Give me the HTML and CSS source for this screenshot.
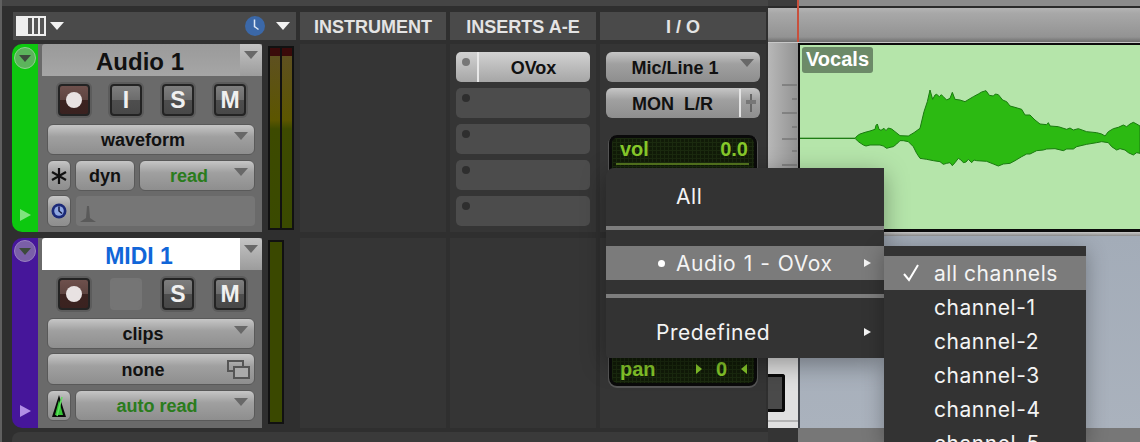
FILE: index.html
```html
<!DOCTYPE html>
<html lang="en">
<head>
<meta charset="utf-8">
<title>Pro Tools Edit Window</title>
<link rel="stylesheet" href="styles.css">
</head>
<body>
<div class="app">
  <section class="mixer">
    <div class="topband"></div>
    <div class="columns headers">
      <div class="head head-tools">
        <svg class="view-icon" width="30" height="20" viewBox="0 0 30 20"><rect width="30" height="20" fill="#eee"/><rect x="12" y="2" width="4" height="16" fill="#555"/><rect x="18" y="2" width="4" height="16" fill="#555"/><rect x="24" y="2" width="4" height="16" fill="#555"/></svg>
        <i class="tri tri-white"></i>
        <svg class="clock-icon" width="22" height="22" viewBox="0 0 22 22"><circle cx="11" cy="11" r="10" fill="#3b68a8"/><path d="M10.5 4.5v7l4 3" stroke="#dfe8f5" stroke-width="1.5" fill="none"/></svg>
        <i class="tri tri-white"></i>
      </div>
      <div class="head">INSTRUMENT</div>
      <div class="head">INSERTS A-E</div>
      <div class="head">I / O</div>
    </div>

    <div class="columns track track-one">
      <div class="strip">
        <div class="color color-audio">
          <span class="disc disc-audio"><i class="tri tri-dark"></i></span>
          <svg width="12" height="12" viewBox="0 0 12 12"><path d="M1 0l11 6-11 6z" fill="#7fe47f"/></svg>
        </div>
        <div class="panel">
          <div class="name"><span class="name-text">Audio 1</span><span class="name-arrow"><i class="tri tri-grey"></i></span></div>
          <div class="btns">
            <span class="btn rec"><b class="dot"></b></span>
            <span class="btn">I</span>
            <span class="btn">S</span>
            <span class="btn">M</span>
          </div>
          <div class="pill pill-mode"><span class="lbl">waveform</span><i class="tri tri-grey corner"></i></div>
          <div class="line">
            <span class="pill sq"><svg width="18" height="18" viewBox="0 0 18 18"><path d="M9 1v16M2 5l14 8M16 5L2 13" stroke="#111" stroke-width="2.2"/></svg></span>
            <span class="pill dyn"><span class="lbl-c">dyn</span></span>
            <span class="pill grow green"><span class="lbl">read</span><i class="tri tri-grey corner"></i></span>
          </div>
          <div class="line line-low">
            <span class="pill sq"><svg width="18" height="18" viewBox="0 0 18 18"><circle cx="9" cy="9" r="7.5" fill="#1c2a78"/><circle cx="9" cy="9" r="4.8" fill="#8ea6e0"/><path d="M9 4.5V9l3 2.5" stroke="#10163f" stroke-width="1.5" fill="none"/></svg></span>
            <span class="empty"><svg width="16" height="18" viewBox="0 0 16 18"><path d="M7 1h2l1 12 6 4H0l6-4z" fill="#5a5a5a"/></svg></span>
          </div>
        </div>
        <div class="meter meter-two">
          <span class="ch ch-hot"></span><span class="ch ch-hot"></span>
        </div>
      </div>
      <div class="cell"></div>
      <div class="cell inserts">
        <div class="slot slot-on"><i class="led"></i><span class="slot-name">OVox</span></div>
        <div class="slot"><i class="led"></i></div>
        <div class="slot"><i class="led"></i></div>
        <div class="slot"><i class="led"></i></div>
        <div class="slot"><i class="led"></i></div>
      </div>
      <div class="cell io">
        <div class="pill io-pill"><span class="lbl">Mic/Line 1</span><i class="tri tri-grey corner"></i></div>
        <div class="pill io-pill mon"><span class="lbl-c">MON&nbsp; L/R</span><span class="mon-end"><svg width="10" height="18" viewBox="0 0 10 18"><path d="M5 0v18" stroke="#666" stroke-width="2"/><rect y="6" width="10" height="4" fill="#777"/></svg></span></div>
        <div class="lcd lcd-vol">
          <div class="lcd-row"><span>vol</span><span>0.0</span></div>
          <div class="lcd-rule"></div>
        </div>
      </div>
    </div>

    <div class="columns track track-two">
      <div class="strip">
        <div class="color color-midi">
          <span class="disc disc-midi"><i class="tri tri-dark"></i></span>
          <svg width="12" height="12" viewBox="0 0 12 12"><path d="M1 0l11 6-11 6z" fill="#b28fe6"/></svg>
        </div>
        <div class="panel">
          <div class="name"><span class="name-text name-midi">MIDI 1</span><span class="name-arrow"><i class="tri tri-grey"></i></span></div>
          <div class="btns">
            <span class="btn rec"><b class="dot"></b></span>
            <span class="btn btn-off"></span>
            <span class="btn">S</span>
            <span class="btn">M</span>
          </div>
          <div class="pill pill-mode"><span class="lbl">clips</span><i class="tri tri-grey corner"></i></div>
          <div class="pill pill-none"><span class="lbl">none</span>
            <svg class="corner-win" width="23" height="19" viewBox="0 0 23 19"><rect x="1" y="1" width="15" height="10" fill="none" stroke="#555" stroke-width="2"/><rect x="7" y="7" width="15" height="11" fill="#aaa" stroke="#555" stroke-width="2"/></svg>
          </div>
          <div class="line line-auto">
            <span class="pill sq"><svg width="16" height="24" viewBox="0 0 16 24"><path d="M8 1L1 23h14z" fill="#0a0a0a"/><path d="M8 6l-4 15h8z" fill="#35c435"/><path d="M6 22L11 3" stroke="#5fe05f" stroke-width="1.5"/></svg></span>
            <span class="pill grow green"><span class="lbl">auto read</span><i class="tri tri-grey corner"></i></span>
          </div>
        </div>
        <div class="meter meter-one">
          <span class="ch ch-cold"></span>
        </div>
      </div>
      <div class="cell"></div>
      <div class="cell"></div>
      <div class="cell io io-low">
        <div class="lcd lcd-pan">
          <div class="lcd-row">
            <span>pan</span>
            <span class="pan-val"><i class="arr arr-r"></i><span>0</span><i class="arr arr-l"></i></span>
          </div>
        </div>
      </div>
    </div>
    <div class="mixer-foot"></div>
  </section>

  <section class="timeline">
    <div class="tl-top"><span class="tl-top-left"></span><span class="tl-top-right"></span></div>
    <div class="ruler"><span class="cursor"></span></div>
    <div class="lane lane-one">
      <div class="gutter">
        <svg width="30" height="186" viewBox="0 0 30 186"><g stroke="#777" stroke-width="1.4"><path d="M14 42h15M24 56h5M14 70h15M24 84h5M14 96h15M24 108h5M14 122h15"/></g></svg>
      </div>
      <div class="clip">
        <span class="clip-tag">Vocals</span>
        <svg class="wave" width="340" height="185" viewBox="60 135 1020 555" preserveAspectRatio="none">
          <path d="M60 415H225L232 407 240 402 255 397 270 393 285 388 288 376 292 372 297 388 303 391 312 385 318 392 325 384 335 387 345 395 360 407 385 408 402 398 420 385 432 335 442 305 450 270 458 298 465 285 470 283 478 290 484 284 490 290 500 300 510 295 517 277 525 298 540 300 555 305 570 296 580 290 595 282 605 276 618 272 628 286 640 288 646 282 655 284 668 300 680 305 690 318 705 322 725 328 735 345 750 345 765 360 780 372 800 374 805 368 810 378 835 380 860 388 870 384 880 390 895 386 920 395 950 398 965 402 975 408 985 395 1000 386 1015 382 1030 375 1040 380 1050 372 1060 367 1070 372 1080 378V460L1070 458 1060 465 1045 458 1035 450 1020 446 1010 450 995 440 985 428 965 425 950 428 920 433 890 440 880 447 860 447 850 452 825 446 800 447 790 450 770 452 750 462 740 462 725 470 705 482 690 490 670 492 655 498 640 492 620 484 590 482 582 480 575 488 565 478 558 486 550 488 543 480 535 475 525 488 517 497 510 488 500 490 490 493 480 485 460 482 440 478 420 475 410 460 400 440 385 425 370 422 360 422 350 432 340 440 330 442 320 445 310 438 300 435 285 435 270 435 258 438 250 435 235 425 225 415H60Z" fill="#2cba12" stroke="#1a7a10" stroke-width="3"/>
        </svg>
      </div>
    </div>
    <div class="lane-gap"></div>
    <div class="lane lane-two">
      <div class="gutter gutter-light">
        <div class="fader"></div>
        <div class="fader-rule"></div>
      </div>
      <div class="midi-lane"></div>
    </div>
    <div class="tl-foot"><span class="tl-foot-left"></span><span class="tl-foot-right"></span></div>
  </section>

  <nav class="menu">
    <div class="menu-row menu-all">All</div>
    <div class="sep"></div>
    <div class="menu-row menu-hi"><i class="bullet"></i><span>Audio 1 - OVox</span><i class="sub-arrow"></i></div>
    <div class="sep sep-two"></div>
    <div class="menu-row menu-pre"><span>Predefined</span><i class="sub-arrow"></i></div>
  </nav>

  <nav class="submenu">
    <div class="sub-row sub-hi"><svg class="check" width="18" height="18" viewBox="0 0 18 18"><path d="M2 10l5 6L16 1" stroke="#fff" stroke-width="2" fill="none"/></svg>all channels</div>
    <div class="sub-row">channel-1</div>
    <div class="sub-row">channel-2</div>
    <div class="sub-row">channel-3</div>
    <div class="sub-row">channel-4</div>
    <div class="sub-row">channel-5</div>
  </nav>
</div>
</body>
</html>
```

FILE: styles.css
```css
* { box-sizing: border-box; }
html, body { margin: 0; padding: 0; }
body { width: 1140px; height: 442px; overflow: hidden; background: #333; font-family: "Liberation Sans", Arial, sans-serif; }
.app { position: relative; display: flex; width: 1140px; height: 442px; overflow: hidden; }

.mixer { width: 768px; height: 442px; flex: none; background: #2f2f2f; border-left: 2px solid #606060; }
.topband { height: 6px; background: #454545; margin-bottom: 6px; }
.columns { display: grid; grid-template-columns: 284px 146px 146px 166px; column-gap: 4px; padding-left: 10px; }
.headers { height: 28px; }
.head { background: #4a4a4a; color: #e4e4e4; font-weight: 700; font-size: 18px; display: flex; align-items: center; justify-content: center; padding-top: 2px; }
.head-tools { margin-left: 1px; justify-content: flex-start; padding: 0 6px 0 3px; }
.view-icon { flex: none; }
.head-tools .tri { margin-left: 4px; }
.clock-icon { margin-left: auto; margin-right: 6px; }

.tri { display: block; width: 0; height: 0; border-style: solid; border-color: transparent; border-width: 8px 7px 0 7px; flex: none; }
.tri-white { border-top-color: #f2f2f2; }
.tri-grey { border-top-color: #686868; }
.tri-dark { border-top-color: #3c4a3c; border-width: 7px 6px 0 6px; }

.track { margin-top: 4px; }
.track-one { height: 188px; }
.track-two { height: 190px; margin-top: 6px; }
.strip { display: flex; }
.color { width: 26px; flex: none; border-radius: 10px 0 0 10px; display: flex; flex-direction: column; align-items: center; justify-content: space-between; padding: 3px 0 11px; }
.color-audio { background: #0dc80f; }
.color-midi { background: #46169a; padding-top: 2px; }
.disc { width: 22px; height: 22px; border-radius: 50%; display: flex; align-items: center; justify-content: center; }
.disc-audio { background: #5cb45c; border: 1px solid #8fd08f; }
.disc-midi { background: #7a5fa8; border: 1px solid #9880c0; }
.panel { width: 224px; flex: none; background: #6a6a6a; padding-left: 4px; }
.name { display: flex; height: 32px; }
.name-text { flex: 1; background: linear-gradient(#9a9a9a, #a6a6a6); color: #111; font-size: 24px; font-weight: 700; text-align: center; line-height: 36px; padding-right: 2px; border-radius: 3px 0 0 0; }
.name-midi { background: #fff; color: #1166d8; font-size: 23px; padding-right: 4px; }
.name-arrow { width: 22px; background: linear-gradient(#c4c4c4, #9c9c9c); border-radius: 0 3px 0 0; display: flex; justify-content: center; padding-top: 7px; }

.btns { display: flex; gap: 20px; margin-top: 8px; padding-left: 16px; }
.btn { width: 32px; height: 32px; border-radius: 4px; border: 2px solid #232323; box-shadow: 0 0 0 2px #5c5c5c; background: linear-gradient(#7e7e7e 0, #6c6c6c 50%, #4e4e4e 50%, #484848 100%); color: #f0f0f0; font-weight: 700; font-size: 23px; display: flex; align-items: center; justify-content: center; }
.rec { background: linear-gradient(#6e504c 0, #5e4440 50%, #3c2320 50%, #3a2220 100%); }
.dot { width: 16px; height: 16px; border-radius: 50%; background: #e8e2e2; }
.btn-off { background: #757575; border-color: #757575; box-shadow: none; }

.pill { position: relative; display: flex; align-items: center; height: 31px; border-radius: 6px; padding-top: 2px; background: linear-gradient(#c6c6c6, #a0a0a0 40%, #8e8e8e); border: 1px solid #595959; color: #111; font-weight: 700; font-size: 18px; }
.pill-mode { width: 208px; margin: 8px 0 0 5px; }
.pill-none { width: 208px; margin: 4px 0 0 5px; height: 32px; }
.lbl { flex: 1; text-align: center; padding-right: 16px; }
.lbl-c { flex: 1; text-align: center; }
.corner { position: absolute; top: 7px; right: 6px; }
.corner-win { position: absolute; right: 4px; top: 6px; }
.line { display: flex; gap: 4px; margin: 5px 0 0 5px; width: 208px; }
.line-low { margin-top: 4px; }
.line-low .sq { height: 32px; }
.line-auto { margin-top: 5px; }
.sq { width: 24px; flex: none; justify-content: center; padding-top: 0; }
.dyn { width: 60px; flex: none; }
.grow { flex: 1; }
.green { color: #2a7c1c; }
.empty { flex: 1; height: 30px; margin: 1px 0 0 1px; background: #767676; border-radius: 4px; display: flex; align-items: flex-end; padding: 0 0 3px 4px; }

.meter { margin: 2px 0 0 6px; height: 184px; border: 2px solid #111; background: #111; display: flex; gap: 2px; }
.meter-two { width: 26px; }
.meter-one { width: 16px; }
.ch { flex: 1; }
.ch-hot { background: linear-gradient(#3a0a0a 0 8px, #5e5020 8px, #5c5600 40%, #3d4a00 45%, #3a4a00); }
.ch-cold { background: #3a4800; }

.cell { background: #353535; }
.inserts { padding: 8px 6px 0; display: flex; flex-direction: column; gap: 6px; }
.slot { position: relative; height: 30px; border-radius: 5px; background: #4c4c4c; }
.led { position: absolute; left: 6px; top: 6px; width: 8px; height: 8px; border-radius: 50%; background: #2e2e2e; }
.slot-on { background: linear-gradient(#d2d2d2, #a6a6a6); display: flex; }
.slot-on .led { background: #777; }
.slot-name { flex: 1; margin-left: 21px; border-left: 2px solid #e8e8e8; text-align: center; font-weight: 700; font-size: 18px; line-height: 33px; padding-right: 2px; color: #111; }

.io { padding: 8px 6px 0; display: flex; flex-direction: column; }
.io-pill { height: 30px; border: none; margin-bottom: 6px; }
.mon-end { width: 21px; height: 100%; flex: none; margin-top: -2px; border-left: 2px solid #e4e4e4; display: flex; align-items: center; justify-content: center; }
.lcd { margin: 11px 3px 0; border: 3px solid #0a0a0a; border-radius: 8px; background-color: #111b08; background-image: linear-gradient(#1b2a0f 1px, transparent 1px), linear-gradient(90deg, #1b2a0f 1px, transparent 1px); background-size: 4px 4px; color: #86c82a; font-weight: 700; font-size: 20px; padding: 0 6px 0 8px; box-shadow: 0 1px 0 1px #555; }
.lcd-vol { height: 95px; }
.lcd-row { display: flex; justify-content: space-between; align-items: center; height: 22px; }
.lcd-rule { height: 2px; margin: 3px -1px 0 -4px; background: #55761f; }
.io-low { padding-top: 52px; }
.lcd-pan { height: 96px; margin-top: 0; display: flex; flex-direction: column; justify-content: flex-end; padding-bottom: 3px; }
.pan-val { display: flex; align-items: center; gap: 14px; margin-right: 1px; }
.arr { width: 0; height: 0; border-style: solid; border-color: transparent; border-width: 5px 0 5px 6px; border-left-color: #86c82a; }
.arr-l { border-width: 5px 6px 5px 0; border-right-color: #86c82a; border-left-color: transparent; }
.mixer-foot { height: 14px; margin-top: 4px; margin-left: 10px; background: #3a3a3a; border-radius: 8px 0 0 0; }

.timeline { flex: 1; display: flex; flex-direction: column; background: #333; }
.tl-top { display: flex; height: 6px; }
.tl-top-left { width: 30px; background: #3d3d3d; }
.tl-top-right { flex: 1; background: #8b8b8b; }
.ruler { position: relative; height: 37px; border-top: 2px solid #2a2a2a; background: linear-gradient(#b4b4b4 0, #a8a8a8 15%, #939393 85%, #6e6e6e 100%); border-bottom: 1px solid #c8c8c8; }
.cursor { position: absolute; left: 29px; top: -8px; width: 2px; height: 42px; background: #c8503c; }
.lane { display: flex; }
.lane-one { height: 189px; }
.gutter { width: 30px; flex: none; background: linear-gradient(90deg, #b8b8b8, #929292); }
.gutter svg { display: block; }
.clip { position: relative; flex: 1; background: #b5e5aa; border: solid #0c0c0c; border-width: 2px 0 3px 2px; }
.clip-tag { position: absolute; left: 2px; top: 2px; padding: 0 4px; height: 26px; line-height: 25px; background: #6c8a68; color: #fff; font-weight: 700; font-size: 20px; border-radius: 3px; }
.wave { display: block; }
.lane-gap { height: 4px; background: linear-gradient(#c8c8c8, #8d8d8d); }
.lane-two { height: 192px; }
.gutter-light { background: #e0e0e0; padding-top: 138px; }
.fader { width: 17px; height: 38px; background: #4a4a4a; border: solid #0a0a0a; border-width: 3px 3px 3px 0; border-radius: 0 3px 3px 0; }
.fader-rule { height: 2px; margin-top: 8px; background: #b4b4b4; }
.midi-lane { flex: 1; background: linear-gradient(#a3acb8, #aab2bd); border-left: 2px solid #45484e; }
.tl-foot { flex: 1; display: flex; }
.tl-foot-left { width: 30px; background: #343434; }
.tl-foot-right { flex: 1; background: #777; }

.menu { position: absolute; left: 606px; top: 168px; width: 278px; height: 190px; background: #333; border-radius: 8px 0 0 4px; box-shadow: 0 6px 24px rgba(0,0,0,.35); color: #f4f4f4; font-family: Inter, "Noto Sans", sans-serif; font-size: 21px; letter-spacing: .55px; }
.menu-row { display: flex; align-items: center; }
.menu-all { height: 58px; padding: 0 0 2px 70px; }
.sep { height: 4px; background: #7e7e7e; }
.menu-hi { height: 34px; margin-top: 16px; padding-left: 52px; background: #7b7b7b; word-spacing: 1px; }
.bullet { width: 7px; height: 7px; border-radius: 50%; background: #fff; margin-right: 11px; }
.sep-two { margin-top: 14px; }
.menu-pre { height: 68px; padding-left: 50px; }
.sub-arrow { width: 0; height: 0; margin-left: auto; margin-right: 13px; border-style: solid; border-color: transparent; border-width: 4px 0 4px 7px; border-left-color: #f4f4f4; }

.submenu { position: absolute; left: 884px; top: 246px; width: 202px; height: 196px; overflow: hidden; background: #333; padding-top: 10px; box-shadow: 0 4px 20px rgba(0,0,0,.3); color: #f4f4f4; font-family: Inter, "Noto Sans", sans-serif; font-size: 21px; letter-spacing: .55px; }
.sub-row { display: flex; align-items: center; height: 34px; padding: 1px 0 0 50px; flex: none; position: relative; }
.sub-hi { background: #7b7b7b; }
.check { position: absolute; left: 18px; top: 8px; }
```
